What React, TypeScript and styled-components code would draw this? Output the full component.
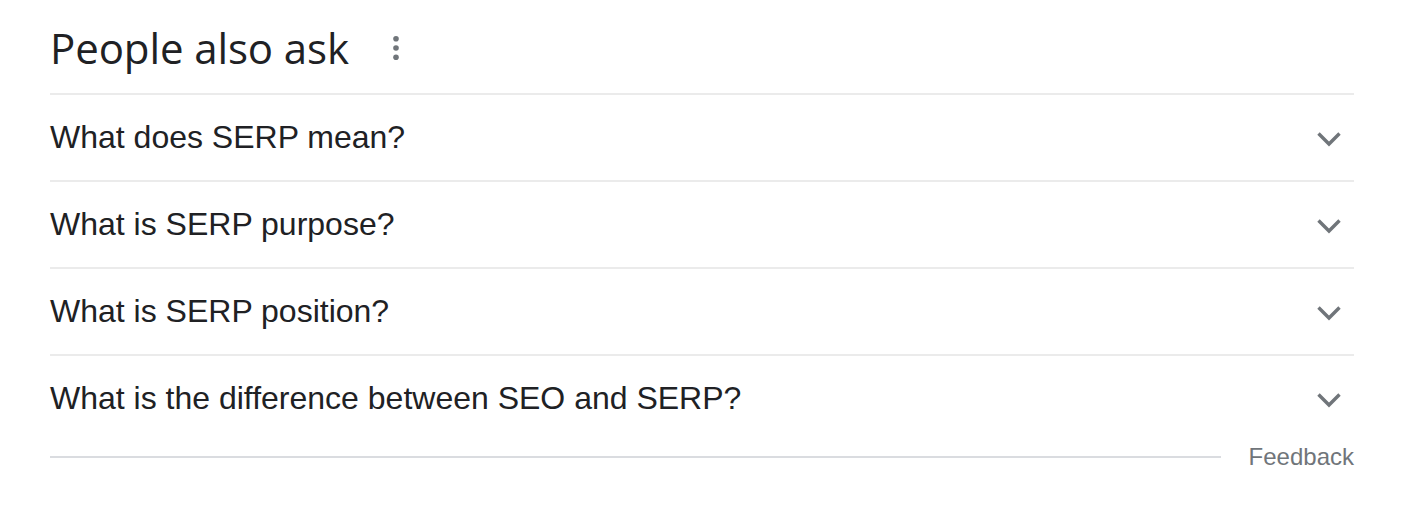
import React from 'react'
import styled, { createGlobalStyle } from 'styled-components'

const questions = [
  'What does SERP mean?',
  'What is SERP purpose?',
  'What is SERP position?',
  'What is the difference between SEO and SERP?',
]

const App = () => {
  return (
    <>
      <Global />
      <Container>
        <Header>
          <Title>People also ask</Title>
          <Dots>
            <svg width="8" height="26" viewBox="0 0 8 26">
              <circle cx="4" cy="3.7" r="2.8" fill="#70757a" />
              <circle cx="4" cy="13" r="2.8" fill="#70757a" />
              <circle cx="4" cy="22.3" r="2.8" fill="#70757a" />
            </svg>
          </Dots>
        </Header>
        <List>
          {questions.map((q) => (
            <Row key={q}>
              <Question>{q}</Question>
              <Chevron>
                <svg width="26" height="16" viewBox="0 0 26 16">
                  <path d="M2.5 2.5 L13 13 L23.5 2.5" fill="none" stroke="#70757a" strokeWidth="3.4" />
                </svg>
              </Chevron>
            </Row>
          ))}
        </List>
        <Footer>
          <Rule />
          <Feedback>Feedback</Feedback>
        </Footer>
      </Container>
    </>
  )
}

export default App

const Global = createGlobalStyle`
  body {
    margin: 0;
    background: #fff;
    font-family: 'Liberation Sans', Arial, sans-serif;
  }
`

const Container = styled.div`
  width: 1304px;
  margin-left: 50px;
  padding-top: 23px;
`

const Header = styled.div`
  display: flex;
  align-items: center;
  height: 52px;
  border-bottom: 2px solid #ebebeb;
  padding-bottom: 18px;
`

const Title = styled.h2`
  margin: -3px 0 0;
  font-family: 'Open Sans', Roboto, sans-serif;
  font-size: 42px;
  font-weight: 400;
  color: #202124;
  letter-spacing: -0.1px;
`

const Dots = styled.div`
  display: flex;
  margin-left: 43px;
  margin-top: -2px;
`

const List = styled.div`
  display: flex;
  flex-direction: column;
`

const Row = styled.div`
  display: flex;
  align-items: center;
  justify-content: space-between;
  height: 85px;
  border-bottom: 2px solid #ebebeb;

  &:last-child {
    border-bottom: none;
  }
`

const Question = styled.div`
  font-size: 32px;
  color: #202124;
`

const Chevron = styled.div`
  display: flex;
  margin-right: 12px;
  margin-top: 2px;
`

const Footer = styled.div`
  display: flex;
  align-items: center;
  margin-top: 2px;
`

const Rule = styled.div`
  flex: 1;
  height: 2px;
  background: #dadce0;
  margin-right: 28px;
`

const Feedback = styled.div`
  font-size: 24px;
  color: #70757a;
`
